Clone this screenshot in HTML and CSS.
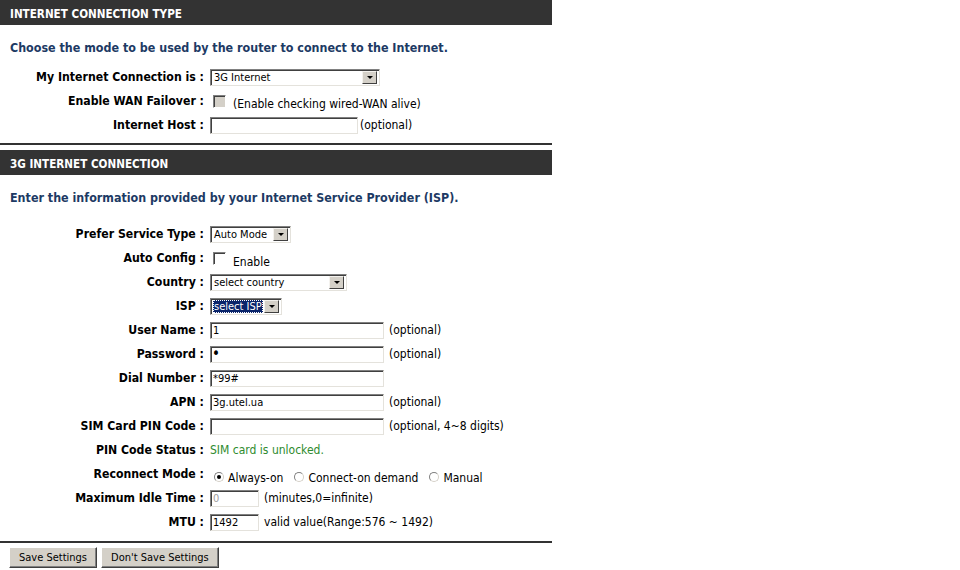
FILE: index.html
```html
<!DOCTYPE html>
<html lang="en">
<head>
  <meta charset="UTF-8" />
  <title>Internet Connection - 3G</title>
  <link rel="stylesheet" href="styles.css">
</head>
<body>
  <div class="page">
    <div class="box-title">INTERNET CONNECTION TYPE</div>
    <p class="intro">Choose the mode to be used by the router to connect to the Internet.</p>
    <div class="form-grid">
      <div class="label">My Internet Connection is :</div>
      <div class="field">
        <span class="combo combo-wan"><span class="combo-text">3G Internet</span><span class="combo-btn"></span></span>
      </div>

      <div class="label">Enable WAN Failover :</div>
      <div class="field">
        <input type="checkbox" class="check" disabled>
        <span class="note">(Enable checking wired-WAN alive)</span>
      </div>

      <div class="label">Internet Host :</div>
      <div class="field tight">
        <input type="text" class="text-input w-host">
        <span>(optional)</span>
      </div>
    </div>

    <hr class="divider">

    <div class="box-title">3G INTERNET CONNECTION</div>
    <p class="intro">Enter the information provided by your Internet Service Provider (ISP).</p>
    <div class="form-grid second">
      <div class="label">Prefer Service Type :</div>
      <div class="field">
        <span class="combo combo-mode"><span class="combo-text">Auto Mode</span><span class="combo-btn"></span></span>
      </div>

      <div class="label">Auto Config :</div>
      <div class="field">
        <input type="checkbox" class="check">
        <span class="note low">Enable</span>
      </div>

      <div class="label">Country :</div>
      <div class="field">
        <span class="combo combo-country"><span class="combo-text">select country</span><span class="combo-btn"></span></span>
      </div>

      <div class="label">ISP :</div>
      <div class="field">
        <span class="combo combo-isp"><span class="combo-text"><span class="selected">select ISP</span></span><span class="combo-btn"></span></span>
      </div>

      <div class="label">User Name :</div>
      <div class="field">
        <input type="text" class="text-input w-long" value="1">
        <span>(optional)</span>
      </div>

      <div class="label">Password :</div>
      <div class="field">
        <input type="password" class="text-input w-long pw" value="1">
        <span>(optional)</span>
      </div>

      <div class="label">Dial Number :</div>
      <div class="field">
        <input type="text" class="text-input w-long" value="*99#">
      </div>

      <div class="label">APN :</div>
      <div class="field">
        <input type="text" class="text-input w-long" value="3g.utel.ua">
        <span>(optional)</span>
      </div>

      <div class="label">SIM Card PIN Code :</div>
      <div class="field">
        <input type="text" class="text-input w-long">
        <span>(optional, 4~8 digits)</span>
      </div>

      <div class="label">PIN Code Status :</div>
      <div class="field">
        <span class="status">SIM card is unlocked.</span>
      </div>

      <div class="label">Reconnect Mode :</div>
      <div class="field radios">
        <label><input type="radio" name="mode" class="radio" checked> Always-on</label>
        <label><input type="radio" name="mode" class="radio"> Connect-on demand</label>
        <label><input type="radio" name="mode" class="radio"> Manual</label>
      </div>

      <div class="label">Maximum Idle Time :</div>
      <div class="field">
        <input type="text" class="text-input w-short" value="0" disabled>
        <span>(minutes,0=infinite)</span>
      </div>

      <div class="label">MTU :</div>
      <div class="field">
        <input type="text" class="text-input w-short" value="1492">
        <span>valid value(Range:576 ~ 1492)</span>
      </div>
    </div>

    <hr class="divider bottom">

    <div class="buttons">
      <button type="button" class="btn">Save Settings</button>
      <button type="button" class="btn">Don't Save Settings</button>
    </div>
  </div>
</body>
</html>
```

FILE: styles.css
```css
body {
  margin: 0;
  background: #ffffff;
  color: #000000;
  font-family: Tahoma, "DejaVu Sans Condensed", "Liberation Sans", sans-serif;
  font-size: 12px;
}
.page {
  width: 552px;
}
.box-title {
  background: #333333;
  color: #ffffff;
  font-weight: bold;
  font-size: 11.6px;
  height: 25px;
  line-height: 28px;
  padding-left: 10px;
}
.intro {
  margin: 15px 0 9px 10px;
  line-height: 16px;
  color: #1d3a64;
  font-weight: bold;
  font-size: 12.4px;
}
.form-grid {
  display: grid;
  grid-template-columns: 204px 1fr;
  grid-auto-rows: 24px;
  column-gap: 6px;
  align-items: center;
}
.form-grid.second {
  margin-top: 16px;
}
.label {
  text-align: right;
  font-weight: bold;
  font-size: 12.2px;
  white-space: nowrap;
}
.field {
  display: flex;
  align-items: center;
  gap: 5px;
  white-space: nowrap;
}
.field.tight {
  gap: 2px;
}
.note {
  margin: 6px 0 0 2px;
}
.note.low {
  margin-top: 8px;
}
.status {
  color: #2e8b2e;
}
.divider {
  border: none;
  border-top: 2px solid #333333;
  margin: 6px 0 5px 0;
}
.divider.bottom {
  margin: 7px 0 4px 0;
}

/* sunken text boxes */
.text-input {
  box-sizing: border-box;
  height: 17px;
  margin: 0;
  padding: 1px 2px 0 2px;
  border: 1px solid;
  border-color: #808080 #e4e2dc #e4e2dc #808080;
  box-shadow: inset 1px 1px 0 #404040;
  font-family: inherit;
  font-size: 11px;
  color: #000000;
  background: #ffffff;
}
.text-input.pw {
  font-size: 15px;
  padding: 0 1px;
}
.text-input:disabled {
  color: #a0a0a0;
  background: #ffffff;
}
.w-host { width: 148px; }
.w-long { width: 174px; }
.w-short { width: 49px; }

/* drop down lists */
.combo {
  box-sizing: border-box;
  display: flex;
  align-items: center;
  height: 17px;
  margin-top: 1px;
  border: 1px solid;
  border-color: #808080 #e4e2dc #e4e2dc #808080;
  box-shadow: inset 1px 1px 0 #404040;
  background: #ffffff;
  padding: 1px 2px 1px 3px;
  font-size: 11px;
}
.combo-text {
  flex: 1;
}
.combo-wan { width: 170px; }
.combo-mode { width: 81px; }
.combo-country { width: 137px; }
.combo-isp { width: 72px; padding-left: 2px; }
.selected {
  background: #0a246a;
  color: #ffffff;
  outline: 1px dotted #ffffff;
  outline-offset: -1px;
  padding: 0 1px;
}
.combo-btn {
  box-sizing: border-box;
  width: 15px;
  height: 13px;
  background: #d4d0c8;
  border: 1px solid;
  border-color: #f4f2ee #404040 #404040 #f4f2ee;
  display: flex;
  align-items: center;
  justify-content: center;
}
.combo-btn::after {
  content: "";
  border-left: 3px solid transparent;
  border-right: 3px solid transparent;
  border-top: 3px solid #000000;
}

/* checkboxes and radios */
.check {
  appearance: none;
  box-sizing: border-box;
  width: 13px;
  height: 13px;
  margin: 0 0 0 3px;
  border: 1px solid;
  border-color: #808080 #ffffff #ffffff #808080;
  box-shadow: inset 1px 1px 0 #404040;
  background: #ffffff;
}
.check:disabled {
  background: #d4d0c8;
}
.radios {
  gap: 7px;
  padding-top: 8px;
}
.radios label {
  display: flex;
  align-items: center;
  gap: 4px;
}
.radio {
  appearance: none;
  box-sizing: border-box;
  width: 10px;
  height: 10px;
  margin: -3px 0 0 4px;
  border-radius: 50%;
  border: 1px solid;
  border-color: #808080 #d4d0c8 #d4d0c8 #808080;
  background: #ffffff;
  position: relative;
}
.radio:checked::after {
  content: "";
  position: absolute;
  left: 2px;
  top: 2px;
  width: 4px;
  height: 4px;
  border-radius: 50%;
  background: #000000;
}

/* buttons */
.buttons {
  display: flex;
  gap: 4px;
  padding-left: 9px;
}
.btn {
  height: 21px;
  padding: 0 9px;
  background: #d4d0c8;
  border: 1px solid;
  border-color: #ffffff #404040 #404040 #ffffff;
  box-shadow: inset -1px -1px 0 #808080;
  font-family: inherit;
  font-size: 11px;
  color: #000000;
}
```
